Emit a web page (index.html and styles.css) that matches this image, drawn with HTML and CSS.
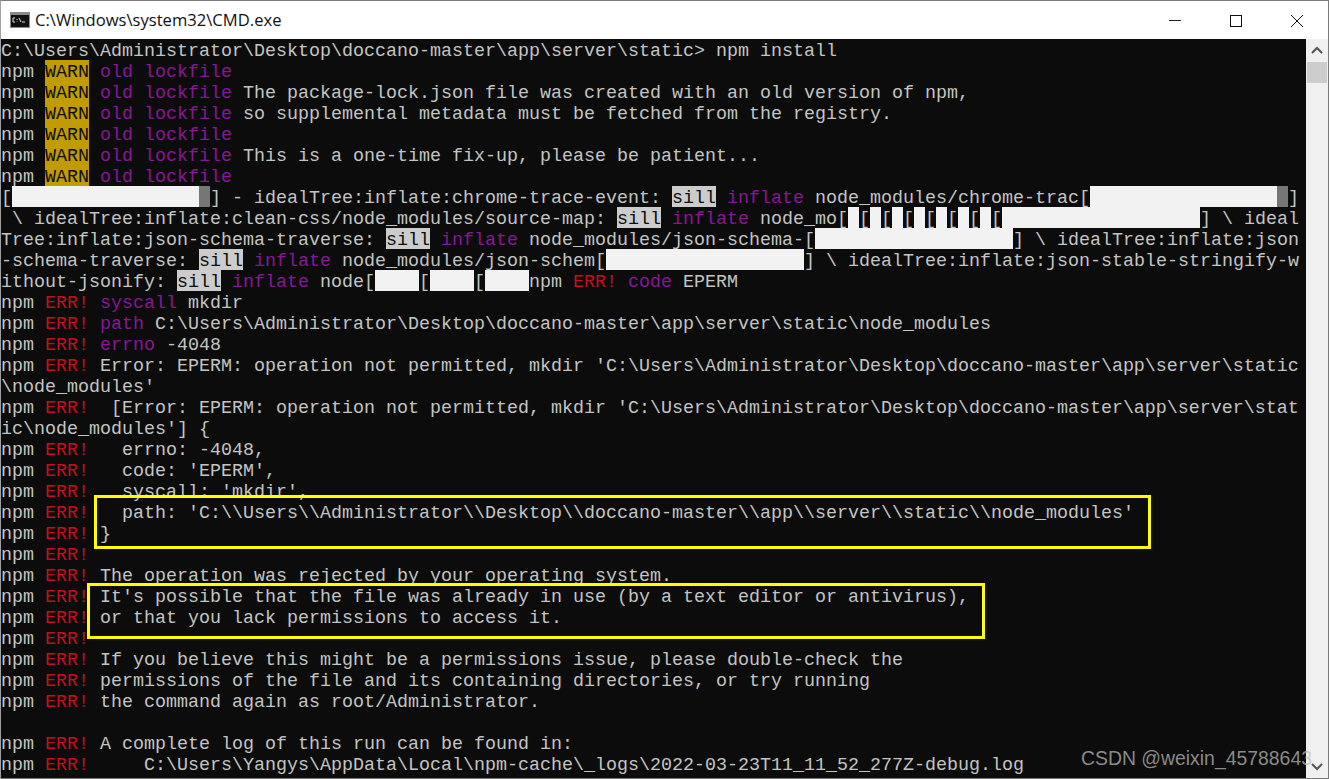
FILE: index.html
```html
<!DOCTYPE html>
<html lang="en">
<head>
<meta charset="utf-8">
<title>CMD</title>
<link rel="stylesheet" href="styles.css">
</head>
<body>
<div class="window">
  <header class="titlebar">
    <svg class="app-icon" width="20" height="16" viewBox="0 0 20 16"><rect x="0" y="0" width="20" height="16" fill="#8a8a8a"/><rect x="1" y="3" width="18" height="12" fill="#111"/><path d="M5 6H3v4h2M7 7v1M7 9.500v.5M9 6l2 4" fill="none" stroke="#ddd" stroke-width="1"/><path d="M12 10h3" stroke="#ddd" stroke-width="1"/></svg>
    <span class="title">C:\Windows\system32\CMD.exe</span>
    <div class="controls">
      <svg class="ctl" width="14" height="14" viewBox="0 0 14 14"><path d="M1 6.500H13" stroke="#222" stroke-width="1"/></svg>
      <svg class="ctl" width="14" height="14" viewBox="0 0 14 14"><rect x="1.500" y="1.500" width="11" height="11" fill="none" stroke="#111" stroke-width="1"/></svg>
      <svg class="ctl" width="14" height="14" viewBox="0 0 14 14"><path d="M1 1L13 13M13 1L1 13" stroke="#111" stroke-width="1"/></svg>
    </div>
  </header>
  <div class="body">
    <div class="console">
<div class="ln">C:\Users\Administrator\Desktop\doccano-master\app\server\static&gt; npm install</div>
<div class="ln">npm <span class="warn">WARN</span> <span class="pu">old lockfile</span></div>
<div class="ln">npm <span class="warn">WARN</span> <span class="pu">old lockfile</span> The package-lock.json file was created with an old version of npm,</div>
<div class="ln">npm <span class="warn">WARN</span> <span class="pu">old lockfile</span> so supplemental metadata must be fetched from the registry.</div>
<div class="ln">npm <span class="warn">WARN</span> <span class="pu">old lockfile</span></div>
<div class="ln">npm <span class="warn">WARN</span> <span class="pu">old lockfile</span> This is a one-time fix-up, please be patient...</div>
<div class="ln">npm <span class="warn">WARN</span> <span class="pu">old lockfile</span></div>
<div class="ln">[<span class="bar">                 </span><span class="rest"> </span>] - idealTree:inflate:chrome-trace-event: <span class="sill">sill</span> <span class="pu">inflate</span> node_modules/chrome-trac[<span class="bar">                 </span><span class="rest"> </span>]</div>
<div class="ln"> \ idealTree:inflate:clean-css/node_modules/source-map: <span class="sill">sill</span> <span class="pu">inflate</span> node_mo[<span class="bar"> </span>[<span class="bar"> </span>[<span class="bar"> </span>[<span class="bar"> </span>[<span class="bar"> </span>[<span class="bar"> </span>[<span class="bar"> </span>[<span class="bar">                  </span>] \ ideal</div>
<div class="ln">Tree:inflate:json-schema-traverse: <span class="sill">sill</span> <span class="pu">inflate</span> node_modules/json-schema-[<span class="bar">                  </span>] \ idealTree:inflate:json</div>
<div class="ln">-schema-traverse: <span class="sill">sill</span> <span class="pu">inflate</span> node_modules/json-schem[<span class="bar">                  </span>] \ idealTree:inflate:json-stable-stringify-w</div>
<div class="ln">ithout-jsonify: <span class="sill">sill</span> <span class="pu">inflate</span> node[<span class="bar">    </span>[<span class="bar">    </span>[<span class="bar">    </span>npm <span class="re">ERR!</span> <span class="pu">code</span> EPERM</div>
<div class="ln">npm <span class="re">ERR!</span> <span class="pu">syscall</span> mkdir</div>
<div class="ln">npm <span class="re">ERR!</span> <span class="pu">path</span> C:\Users\Administrator\Desktop\doccano-master\app\server\static\node_modules</div>
<div class="ln">npm <span class="re">ERR!</span> <span class="pu">errno</span> -4048</div>
<div class="ln">npm <span class="re">ERR!</span> Error: EPERM: operation not permitted, mkdir 'C:\Users\Administrator\Desktop\doccano-master\app\server\static</div>
<div class="ln">\node_modules'</div>
<div class="ln">npm <span class="re">ERR!</span>  [Error: EPERM: operation not permitted, mkdir 'C:\Users\Administrator\Desktop\doccano-master\app\server\stat</div>
<div class="ln">ic\node_modules'] {</div>
<div class="ln">npm <span class="re">ERR!</span>   errno: -4048,</div>
<div class="ln">npm <span class="re">ERR!</span>   code: 'EPERM',</div>
<div class="ln">npm <span class="re">ERR!</span>   syscall: 'mkdir',</div>
<div class="ln">npm <span class="re">ERR!</span>   path: 'C:\\Users\\Administrator\\Desktop\\doccano-master\\app\\server\\static\\node_modules'</div>
<div class="ln">npm <span class="re">ERR!</span> }</div>
<div class="ln">npm <span class="re">ERR!</span></div>
<div class="ln">npm <span class="re">ERR!</span> The operation was rejected by your operating system.</div>
<div class="ln">npm <span class="re">ERR!</span> It's possible that the file was already in use (by a text editor or antivirus),</div>
<div class="ln">npm <span class="re">ERR!</span> or that you lack permissions to access it.</div>
<div class="ln">npm <span class="re">ERR!</span></div>
<div class="ln">npm <span class="re">ERR!</span> If you believe this might be a permissions issue, please double-check the</div>
<div class="ln">npm <span class="re">ERR!</span> permissions of the file and its containing directories, or try running</div>
<div class="ln">npm <span class="re">ERR!</span> the command again as root/Administrator.</div>
<div class="ln"> </div>
<div class="ln">npm <span class="re">ERR!</span> A complete log of this run can be found in:</div>
<div class="ln">npm <span class="re">ERR!</span>     C:\Users\Yangys\AppData\Local\npm-cache\_logs\2022-03-23T11_11_52_277Z-debug.log</div>
    </div>
    <div class="scrollbar">
      <svg class="arrow" width="14" height="8" viewBox="0 0 14 8"><path d="M2 7L7 2L12 7" fill="none" stroke="#555" stroke-width="2"/></svg>
      <div class="thumb"></div>
      <div class="track"></div>
      <svg class="arrow" width="14" height="8" viewBox="0 0 14 8"><path d="M2 1L7 6L12 1" fill="none" stroke="#555" stroke-width="2"/></svg>
    </div>
  </div>
</div>
<div class="mark mark-a"></div>
<div class="mark mark-b"></div>
<div class="watermark">CSDN @weixin_45788643</div>
</body>
</html>
```
FILE: styles.css
```css
* { box-sizing: border-box; }
html, body { margin: 0; padding: 0; }
body { width: 1329px; height: 779px; overflow: hidden; background: #fff; position: relative; }
.window {
  width: 1329px;
  height: 779px;
  display: flex;
  flex-direction: column;
  border: 1px solid #7a7a7a;
  border-left-color: #a0a0a0;
  background: #fff;
}
.titlebar {
  height: 38px;
  flex: none;
  display: flex;
  align-items: center;
  padding-left: 9px;
  background: #fff;
}
.app-icon { flex: none; }
.title {
  margin-left: 5px;
  font: 16.6px/20px "Open Sans", sans-serif;
  color: #111;
}
.controls {
  margin-left: auto;
  display: flex;
  gap: 47px;
  padding-right: 24px;
  margin-top: 2px;
}
.ctl { display: block; }
.body { flex: 1; display: flex; min-height: 0; }
.console {
  flex: 1;
  min-width: 0;
  background: #0c0c0c;
  color: #c4c4c4;
  font-family: "Liberation Mono", monospace;
  font-size: 18.33px;
  overflow: hidden;
}
.ln { height: 21px; line-height: 25px; white-space: pre; }
.warn, .sill, .bar, .rest {
  display: inline-block;
  height: 21px;
  vertical-align: top;
}
.warn { background: #c19c00; color: #0c0c0c; }
.sill { background: #cccccc; color: #0c0c0c; }
.pu { color: #881798; }
.re { color: #c50f1f; }
.bar { background: #f2f2f2; }
.rest { background: #767676; }
.scrollbar {
  flex: none;
  width: 22px;
  background: #f0f0f0;
  display: flex;
  flex-direction: column;
  align-items: center;
  padding-top: 7px;
}
.thumb { width: 20px; height: 21px; margin-top: 8px; background: #cdcdcd; flex: none; }
.track { flex: 1; }
.arrow { flex: none; display: block; }
.scrollbar .arrow:last-child { margin-bottom: 7px; }
.mark { position: absolute; border: 3px solid #ffff00; }
.mark-a { left: 94px; top: 495px; width: 1057px; height: 54px; }
.mark-b { left: 87px; top: 583px; width: 898px; height: 56px; }
.watermark {
  position: absolute;
  left: 1081px;
  top: 747px;
  font: 19.4px/22px "Liberation Sans", sans-serif;
  color: rgba(190, 190, 190, 0.72);
  white-space: nowrap;
}
```
